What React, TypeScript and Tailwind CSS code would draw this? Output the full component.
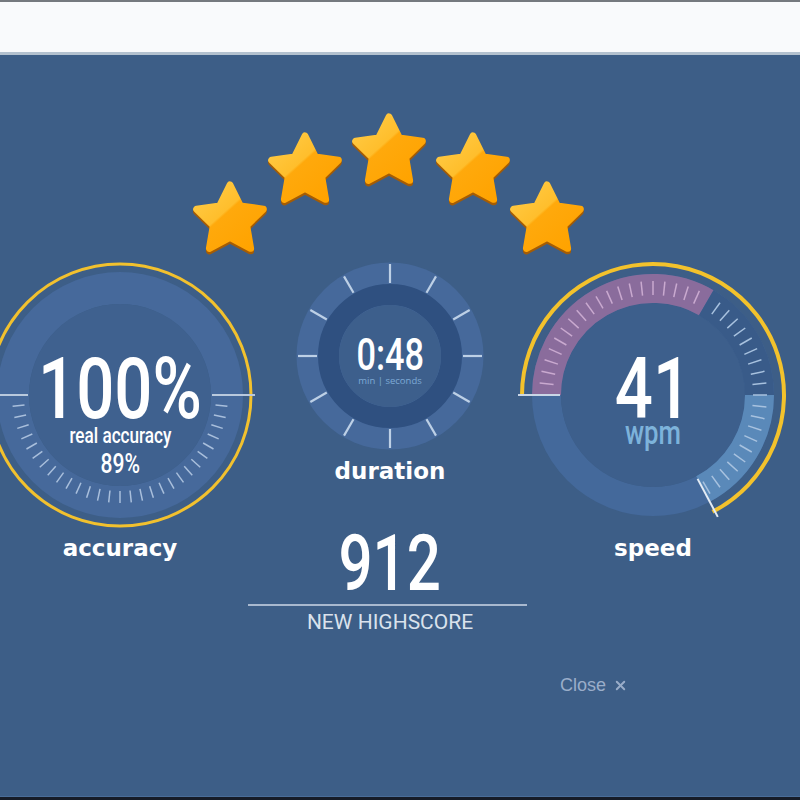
import React from 'react';
import { X } from 'lucide-react';

// 결과 화면 (타이핑 테스트 완료)

// 좁은 숫자 글꼴 대신 Roboto를 가로로 줄여서 사용
const narrow = "inline-block origin-center scale-x-[0.78] font-['Roboto',sans-serif] font-medium";
const label = "font-['DejaVu_Sans','Open_Sans',sans-serif] font-bold text-[23px] leading-[30px] text-white";

const rad = (d: number) => (d * Math.PI) / 180;
const pt = (c: number, r: number, deg: number) => [c + r * Math.cos(rad(deg)), c - r * Math.sin(rad(deg))];

// 시계 방향 호 (a1 -> a2, a1 > a2)
function arc(c: number, r: number, a1: number, a2: number) {
  const [x1, y1] = pt(c, r, a1);
  const [x2, y2] = pt(c, r, a2);
  const large = a1 - a2 > 180 ? 1 : 0;
  return `M ${x1} ${y1} A ${r} ${r} 0 ${large} 1 ${x2} ${y2}`;
}

function Tick({ c, r1, r2, deg, color, w }: { c: number; r1: number; r2: number; deg: number; color: string; w: number }) {
  const [x1, y1] = pt(c, r1, deg);
  const [x2, y2] = pt(c, r2, deg);
  return <line x1={x1} y1={y1} x2={x2} y2={y2} stroke={color} strokeWidth={w} strokeLinecap="butt" />;
}

function Star({ id }: { id: string }) {
  const cx = 38;
  const cy = 40;
  const pts: string[] = [];
  for (let i = 0; i < 10; i++) {
    const a = rad(-90 + i * 36);
    const r = i % 2 === 0 ? 35 : 17.5;
    pts.push(`${cx + r * Math.cos(a)},${cy + r * Math.sin(a)}`);
  }
  const p = pts.join(' ');
  return (
    <svg width="76" height="76" viewBox="0 0 76 76">
      <defs>
        <linearGradient id={id} x1="10" y1="8" x2="62" y2="66" gradientUnits="userSpaceOnUse">
          <stop offset="0" stopColor="#ffcb45" />
          <stop offset="0.42" stopColor="#ffbe2c" />
          <stop offset="0.45" stopColor="#ffa90c" />
          <stop offset="1" stopColor="#ffa300" />
        </linearGradient>
      </defs>
      <polygon points={p} transform="translate(0 2.5)" fill="#a45c05" stroke="#a45c05" strokeWidth="7" strokeLinejoin="round" />
      <polygon points={p} fill={`url(#${id})`} stroke={`url(#${id})`} strokeWidth="7" strokeLinejoin="round" />
    </svg>
  );
}

function AccuracyGauge() {
  const c = 135;
  const ticks = [];
  for (let d = -6; d > -180; d -= 6) ticks.push(d);
  return (
    <svg width="270" height="270" viewBox="0 0 270 270">
      <circle cx={c} cy={c} r="107" fill="none" stroke="#46699b" strokeWidth="32" />
      <circle cx={c} cy={c} r="91" fill="#3f618f" />
      {ticks.map((d) => (
        <Tick key={d} c={c} r1={96} r2={108} deg={d} color="#a9bfdc" w={1.5} />
      ))}
      <circle cx={c} cy={c} r="131" fill="none" stroke="#f2c12e" strokeWidth="3" />
      <Tick c={c} r1={92} r2={140} deg={0} color="#b9c9dd" w={2} />
      <Tick c={c} r1={92} r2={140} deg={180} color="#b9c9dd" w={2} />
    </svg>
  );
}

function DurationGauge() {
  const c = 100;
  const ticks = Array.from({ length: 12 }, (_, i) => i * 30);
  return (
    <svg width="200" height="200" viewBox="0 0 200 200">
      <circle cx={c} cy={c} r="93.5" fill="#46699b" />
      <circle cx={c} cy={c} r="61.5" fill="none" stroke="#2f5080" strokeWidth="21" />
      <circle cx={c} cy={c} r="51" fill="#3d5f8c" />
      {ticks.map((d) => (
        <Tick key={d} c={c} r1={73} r2={92} deg={d} color="#bdd0e6" w={2.2} />
      ))}
    </svg>
  );
}

function SpeedGauge() {
  const c = 135;
  const pink = [];
  for (let d = 174; d > 60; d -= 6) pink.push(d);
  const rest = [];
  for (let d = 54; d > -62; d -= 6) rest.push(d);
  return (
    <svg width="270" height="270" viewBox="0 0 270 270">
      <circle cx={c} cy={c} r="106.5" fill="none" stroke="#44699b" strokeWidth="29" />
      <circle cx={c} cy={c} r="92" fill="#3d5f8c" />
      <path d={arc(c, 106.5, 180, 60)} fill="none" stroke="#8a6c9c" strokeWidth="29" />
      <path d={arc(c, 106.5, 60, 0)} fill="none" stroke="#395b89" strokeWidth="29" />
      <path d={arc(c, 106.5, 0, -62)} fill="none" stroke="#5a89b9" strokeWidth="29" />
      {pink.map((d) => (
        <Tick key={d} c={c} r1={100} r2={114} deg={d} color="#c9a9cf" w={1.5} />
      ))}
      {rest.map((d) => (
        <Tick key={d} c={c} r1={100} r2={114} deg={d} color="#a8c2df" w={1.5} />
      ))}
      <path d={arc(c, 131, 180, -63)} fill="none" stroke="#f3c22c" strokeWidth="4" />
      <Tick c={c} r1={93} r2={135} deg={180} color="#c9d6e6" w={2} />
      <Tick c={c} r1={95} r2={138} deg={-62} color="#e3ebf4" w={2} />
    </svg>
  );
}

export default function App() {
  return (
    <div className="w-[800px] h-[800px] flex flex-col overflow-hidden bg-[#3d5e87]">
      {/* 상단 흰색 바 */}
      <div className="h-[52px] shrink-0 border-t-2 border-[#75797f] bg-[#f9fafc]" />
      <div className="h-[3px] shrink-0 bg-[#b3c1cf]" />

      <div className="flex-1 flex flex-col bg-[#3d5e87]">
        {/* 별점 */}
        <div className="flex items-start pt-[57px] pl-[192px]">
          <div className="mt-[68px]"><Star id="s1" /></div>
          <div className="mt-[19px] ml-[-1px]"><Star id="s2" /></div>
          <div className="ml-[8px]"><Star id="s3" /></div>
          <div className="mt-[19px] ml-[8px]"><Star id="s4" /></div>
          <div className="mt-[68px] ml-[-2px]"><Star id="s5" /></div>
        </div>

        {/* 게이지 */}
        <div className="flex items-start mt-[4px] ml-[-15px]">
          <div className="w-[270px] flex flex-col items-center">
            <div className="relative">
              <AccuracyGauge />
              <div className="absolute inset-0 flex flex-col items-center pt-[94px] text-white">
                <div className="h-[62px] text-[86px] leading-[62px]"><span className={narrow}>100%</span></div>
                <div className="h-[22px] text-[22px] leading-[22px] mt-[7px]"><span className={narrow}>real accuracy</span></div>
                <div className="h-[27px] text-[27px] leading-[27px] mt-[4px]"><span className={narrow}>89%</span></div>
              </div>
            </div>
            <div className={`${label} mt-[3px]`}>accuracy</div>
          </div>

          <div className="w-[270px] flex flex-col items-center">
            <div className="relative mt-[-4px]">
              <DurationGauge />
              <div className="absolute inset-0 flex flex-col items-center pt-[80px]">
                <div className="h-[34px] text-[44px] leading-[34px] text-white"><span className={narrow}>0:48</span></div>
                <div className="text-[9.5px] leading-[10px] mt-[6px] text-[#7eaad6] font-['Open_Sans',sans-serif]">min | seconds</div>
              </div>
            </div>
            <div className={label}>duration</div>
            <div className="h-[56px] text-[77px] leading-[56px] text-white mt-[47px]"><span className={narrow}>912</span></div>
            <div className="w-[279px] h-[2px] bg-[#a9b9cf] mt-[15px] ml-[-5px]" />
            <div className="text-[21px] leading-[24px] mt-[4px] text-[#dae2ec] font-['Roboto',sans-serif]">NEW HIGHSCORE</div>
          </div>

          <div className="w-[270px] ml-[-7px] flex flex-col items-center">
            <div className="relative">
              <SpeedGauge />
              <div className="absolute inset-0 flex flex-col items-center pt-[94px]">
                <div className="h-[62px] text-[86px] leading-[62px] text-white"><span className={narrow}>41</span></div>
                <div className="h-[30px] text-[33px] leading-[30px] mt-[1px] text-[#7db3db]"><span className={narrow}>wpm</span></div>
              </div>
            </div>
            <div className={`${label} mt-[3px]`}>speed</div>
          </div>
        </div>

        {/* 닫기 */}
        <div className="flex items-center gap-[7px] mt-[40px] pl-[560px] text-[18px] leading-[22px] text-[#9aadc9] font-['Liberation_Sans',sans-serif]">
          <span>Close</span>
          <X className="w-[15px] h-[15px]" strokeWidth={3} />
        </div>
      </div>

      <div className="h-[1px] shrink-0 bg-[#4a6d99]" />
      <div className="h-[3px] shrink-0 bg-[#161c28]" />
    </div>
  );
}
